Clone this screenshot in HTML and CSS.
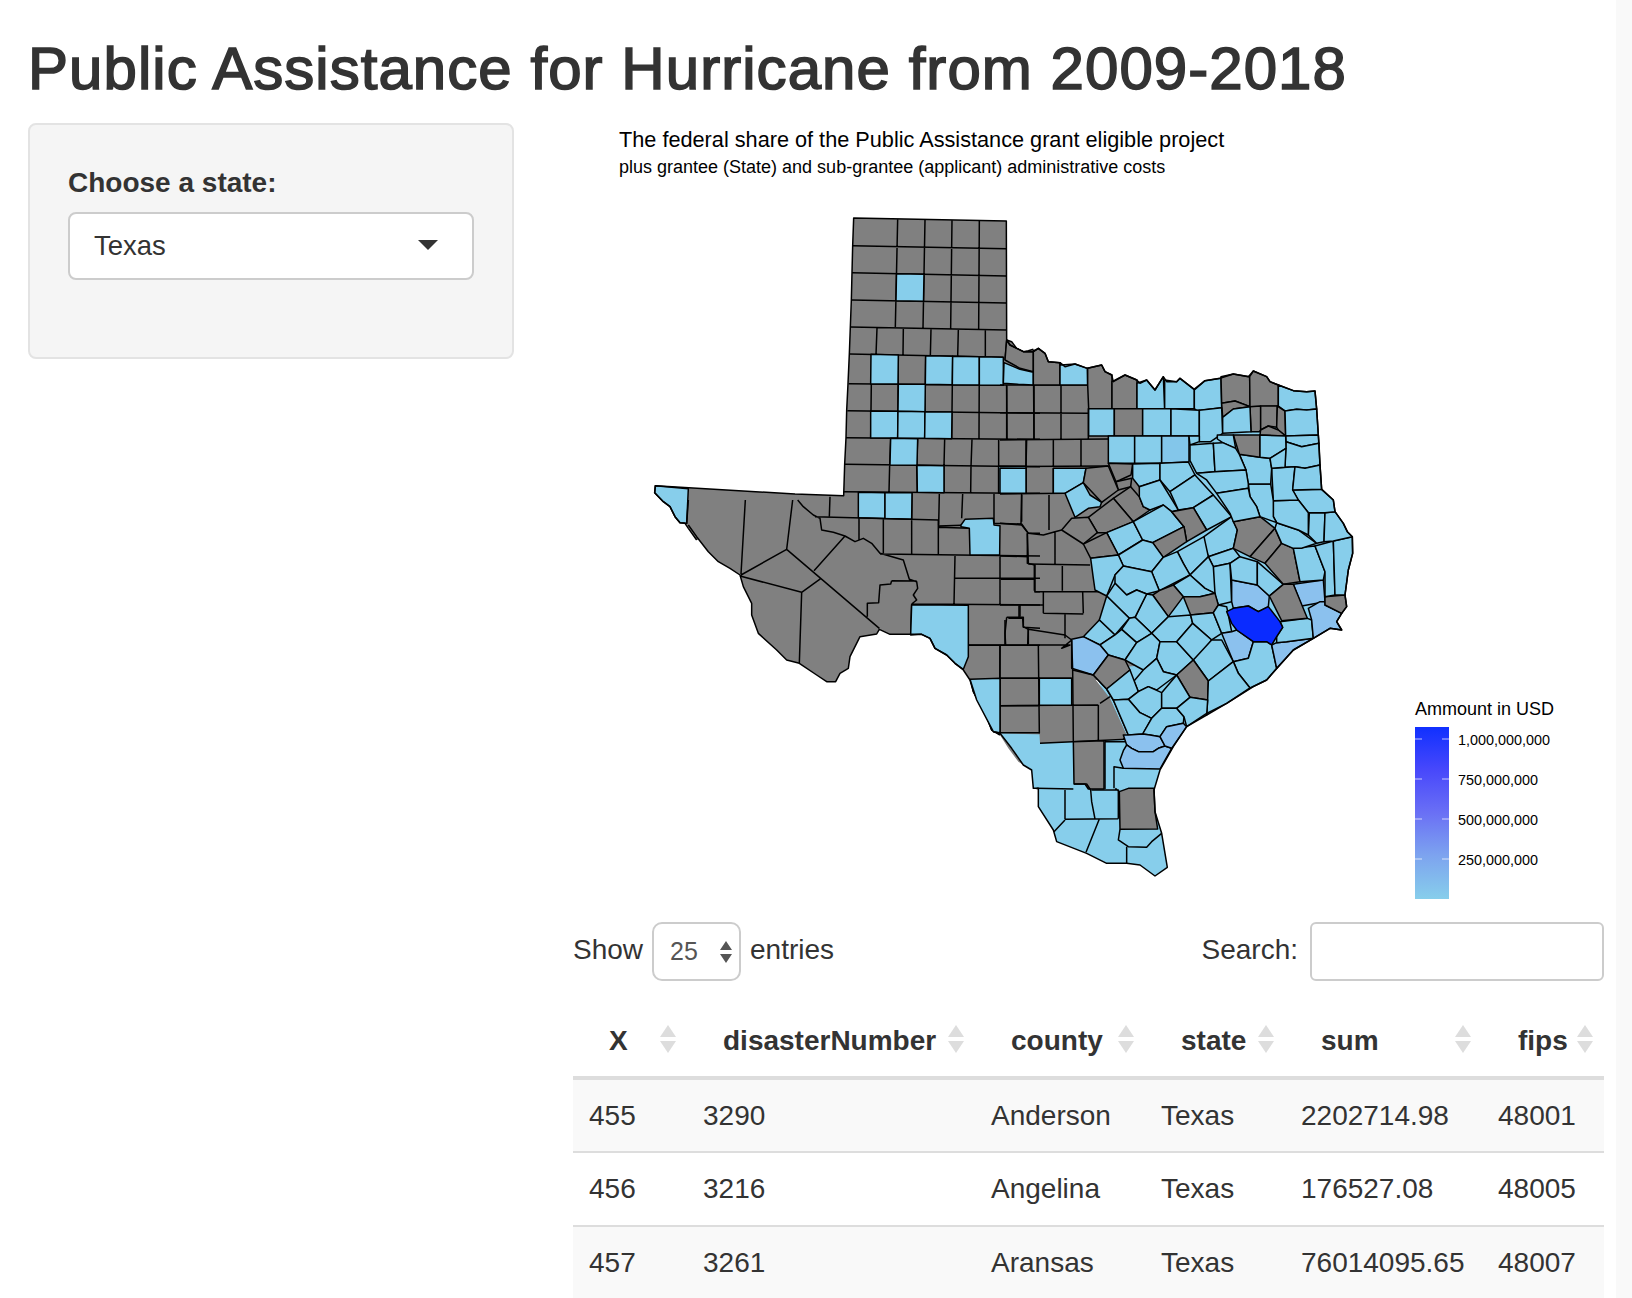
FILE: index.html
```html
<!DOCTYPE html>
<html lang="en">
<head>
<meta charset="utf-8">
<title>Public Assistance for Hurricane from 2009-2018</title>
<link rel="stylesheet" href="styles.css">
</head>
<body>
<div class="page">
  <h1 class="title">Public Assistance for Hurricane from 2009-2018</h1>
  <div class="layout">
    <aside class="panel">
      <label class="field-label">Choose a state:</label>
      <div class="picker"><span>Texas</span><i class="caret"></i></div>
    </aside>
    <main class="main">
      <svg class="plot" viewBox="573 123 1031 784" width="1031" height="784" xmlns="http://www.w3.org/2000/svg">
        <defs>
          <linearGradient id="scale" x1="0" y1="0" x2="0" y2="1">
            <stop offset="0" stop-color="#1030ff"/>
            <stop offset=".25" stop-color="#4848fb"/>
            <stop offset=".5" stop-color="#6a70f5"/>
            <stop offset=".75" stop-color="#7da4ef"/>
            <stop offset="1" stop-color="#87ceeb"/>
          </linearGradient>
        </defs>
        <text class="plot-title" x="619" y="147">The federal share of the Public Assistance grant eligible project</text>
        <text class="plot-sub" x="619" y="173">plus grantee (State) and sub-grantee (applicant) administrative costs</text>

        <g class="map">
          <!-- base fills -->
          <g transform="translate(640 200) scale(.33333)">
            <polygon class="base g" points="170,1020 145,985 135,970 120,968 105,950 90,920 70,905 44,878 46,857 465,882 611,887 614,793 618,713 620,632 624,551 628,462 631,381 634,300 636,218 638,137 641,54 1099,63 1100,420 1115,425 1130,445 1150,455 1165,452 1180,448 1200,445 1200,1020"/>
          </g>
          <g transform="translate(640 500) scale(.33333)">
            <polygon class="base g" points="145,75 170,110 205,155 235,185 270,205 300,225 310,260 335,310 335,345 355,400 410,450 440,480 478,490 530,525 560,545 587,545 600,520 625,505 630,470 660,410 710,402 718,388 750,403 810,403 845,403 870,415 885,445 920,465 945,490 970,510 990,540 1000,575 1040,650 1055,690 1080,705 1105,745 1135,785 1175,810 1180,865 1195,870 1200,920 1200,0 145,0"/>
          </g>
          <g transform="translate(1000 340) scale(.33333)">
            <polygon class="base g" points="20,0 30,15 70,35 100,35 115,25 135,40 145,65 180,68 195,80 225,72 262,85 305,75 315,95 335,105 340,125 375,105 410,120 420,130 440,120 465,150 490,110 500,125 530,125 540,115 582,148 615,122 660,115 700,102 745,110 760,93 800,110 810,125 835,135 880,152 920,155 945,153 950,207 955,285 960,375 965,448 1000,480 1005,515 1030,550 1042,575 1057,590 1058,640 1045,690 1035,765 1040,800 1025,820 1010,845 1025,870 990,865 940,895 880,930 800,1020 0,1020 0,0"/>
            <polygon class="base b" points="412,130 440,120 465,150 490,110 500,125 530,125 540,115 582,148 615,122 660,115 700,102 745,110 760,93 800,110 810,125 835,135 880,152 920,155 945,153 950,207 955,285 960,375 965,448 1000,480 1005,515 1030,550 1042,575 1057,590 1058,640 1045,690 1035,765 1040,800 1025,820 1010,845 1025,870 990,865 940,895 880,930 800,1020 600,1020 500,960 300,915 320,775 272,660 360,645 320,578 400,545 420,440 398,372 327,372 327,292 600,290 600,210 412,205"/>
          </g>
          <g transform="translate(960 620) scale(.33333)">
            <polygon class="base b" points="920,180 880,200 800,250 740,280 680,320 640,380 600,450 582,510 585,575 605,640 622,742 585,768 540,735 500,730 440,730 380,700 290,665 280,630 235,560 235,505 220,505 215,450 190,435 155,385 120,340 490,350 400,150 920,100"/>
            <polygon class="base g" points="25,0 390,0 360,55 335,60 335,150 400,170 450,235 500,345 490,358 415,362 340,365 240,370 238,340 118,338 100,335 50,240 30,178 10,150"/>
          </g>

          <!-- north-west: Panhandle and Trans-Pecos -->
          <g transform="translate(640 200) scale(.33333)">
            <path class="l" d="M773,58L766,381M855,60L849,385M936,61L932,385M1018,62L1016,388M711,385L708,464M790,386L789,466M873,388L871,468M955,389L953,470M1036,390L1036,470M695,465L692,712M775,466L773,715M857,468L854,716M938,470L935,717M1018,471L1017,718M1100,558L1101,720M1180,450L1182,720M638,137L1099,146M636,218L1099,228M634,300L1099,309M631,381L1099,390M629,462L1090,472M626,551L1090,556M622,632L1200,640M618,713L1200,718M615,793L1200,800M752,716L749,795M833,716L830,798M914,717L912,798M996,718L993,800M1076,718L1076,800M1160,718L1158,800M749,795L747,875M830,798L832,880M912,798L912,880M993,800L992,880M1076,800L1076,880M1158,800L1157,880M611,875L1200,880M570,890L568,950M816,880L815,960M898,882L896,975M968,882L965,955M1062,882L1062,970M1145,882L1143,972M1062,970L1145,972L1165,1000L1200,1000"/>
            <polygon class="b" points="769.5,221 852,222.6 850.5,304 768,302.6"/>
            <polygon class="b" points="693,463 775,465 774,552 692,552"/>
            <polygon class="b" points="857,467 938,469 937,554 856,553"/>
            <polygon class="b" points="938,469 1018,470 1018,555 937,554"/>
            <polygon class="b" points="1018,470 1090,472 1090,556 1018,555"/>
            <polygon class="b" points="775,553 856,553 855,635 774,634"/>
            <polygon class="b" points="692,633 774,634 773,714 692,714"/>
            <polygon class="b" points="774,634 855,635 854,715 773,714"/>
            <polygon class="b" points="855,635 936,636 935,716 854,715"/>
            <polygon class="b" points="752,715 833,716 831,796 750,795"/>
            <polygon class="b" points="831,796 912,797 912,878 832,877"/>
            <polygon class="b" points="1076,798 1158,799 1157,879 1076,879"/>
            <polygon class="b" points="655,877 735,878 735,955.7 655,953"/>
            <polygon class="b" points="735,878 816,878 815,957.8 735,955.7"/>
            <polygon class="b" points="46,857 145,866 140,970 120,968 105,950 90,920 70,905 44,878"/>
            <path class="l" d="M170,1020L145,985L135,970L120,968L105,950L90,920L70,905L44,878L46,857L465,882L611,887L614,793L618,713L620,632L624,551L628,462L631,381L634,300L636,218L638,137L641,54L1099,63L1100,420L1115,425L1130,445L1150,455L1165,452L1180,448"/>
          </g>

          <!-- south-west: Big Bend and border -->
          <g transform="translate(640 500) scale(.33333)">
            <path class="l" d="M145,0L140,72M316,0L303,222M458,0L440,148M303,225L440,148L718,385M300,228L485,277L543,235M522,212L615,108M485,277L478,490M473,0L490,20L520,45L540,55L545,90L580,97L615,108L645,125L670,115L695,130L720,160L790,180L808,238L830,245L833,265L820,285L830,300L815,312M755,242L830,243M755,242L752,252L720,255L716,308L682,310L682,350M815,312L812,403M525,50L895,60M657,55L657,120M730,58L730,160M815,60L815,163M895,62L895,165M720,162L1200,168M895,78L965,76M895,82L988,85M945,168L942,312M945,235L1200,235M1080,165L1080,312M815,312L1200,315M1137,316L1137,352M1100,352L1150,352L1150,382L1200,385M1100,352L1095,400L1097,435M1165,385L1163,435M985,436L1200,436M1080,436L1078,700M1080,535L1200,535M1082,617L1200,617M1078,698L1200,698M1162,100L1162,190L1185,195L1185,275L1200,275"/>
            <polygon class="b" points="963,75 975,58 1060,55 1062,75 1080,77 1079,165 990,165 988,85 963,80"/>
            <polygon class="b" points="815,314 985,316 985,470 970,508 945,490 920,465 885,445 870,415 845,403 812,405"/>
            <polygon class="b" points="992,540 1078,538 1076,698 1055,690 1040,650 1000,575"/>
            <path class="l" d="M145,75L170,110L205,155L235,185L270,205L300,225L310,260L335,310L335,345L355,400L410,450L440,480L478,490L530,525L560,545L587,545L600,520L625,505L630,470L660,410L710,402L718,388L750,403L810,403L845,403L870,415L885,445L920,465L945,490L970,510L990,540L1000,575L1040,650L1055,690L1080,705"/>
          </g>

          <!-- north-east and Gulf -->
          <g transform="translate(1000 340) scale(.33333)">
            <path class="l" d="M20,135L20,298M102,135L102,298M183,135L183,298M265,205L265,300M0,135L335,135M0,218L265,220M0,300L325,297M78,300L78,380M160,300L160,378M243,300L243,378M0,380L325,378M78,385L78,460M160,385L160,460M0,462L195,460M65,465L65,545M147,465L147,570M0,550L65,555L85,580L130,585L165,575L185,570M82,580L85,670M165,575L165,675M0,648L85,650M85,672L270,675M103,675L103,752M187,678L187,752M2,718L103,718M0,795L130,795M130,755L130,820M103,755L320,755M248,755L250,820M130,820L250,822M195,822L195,895M60,795L60,830M25,835L68,835L70,860L85,868M20,0L15,60"/>
            <polygon class="g" points="15,60 60,85 100,95 100,35 70,35 30,15 20,0"/>
            <polygon class="b" points="12,68 60,88 100,97 100,135 55,133 10,130"/>
            <polygon class="g" points="100,35 115,25 135,40 145,65 180,68 180,135 100,135"/>
            <polygon class="b" points="183,75 225,72 262,85 263,135 180,135 180,68"/>
            <polygon class="g" points="263,85 305,75 315,95 336,105 336,206 266,206 263,135"/>
            <polygon class="g" points="336,125 375,105 411,120 411,206 336,206"/>
            <polygon class="b" points="411,130 440,120 465,150 490,110 494,206 411,206"/>
            <polygon class="b" points="494,120 530,125 540,115 583,148 583,206 494,206"/>
            <polygon class="b" points="583,150 615,122 663,115 665,203 590,212 583,206"/>
            <polygon class="g" points="663,110 700,102 749,110 750,200 705,183 665,190"/>
            <polygon class="g" points="665,190 705,183 750,200 700,207 668,232"/>
            <polygon class="g" points="749,110 760,93 800,110 810,125 835,135 835,198 750,200"/>
            <polygon class="b" points="835,135 880,152 920,155 945,153 950,207 920,210 890,208 855,213 835,198"/>
            <polygon class="g" points="750,200 782,198 782,270 778,275 753,275"/>
            <polygon class="g" points="782,198 832,198 830,262 805,258 782,270"/>
            <polygon class="g" points="832,198 855,213 857,288 835,270 830,262"/>
            <polygon class="g" points="782,270 805,258 835,270 857,288 780,285"/>
            <polygon class="b" points="266,206 343,206 343,288 266,288"/>
            <polygon class="g" points="343,206 428,206 428,288 343,288"/>
            <polygon class="b" points="428,206 513,206 513,288 428,288"/>
            <polygon class="b" points="513,206 598,211 598,288 513,288"/>
            <polygon class="b" points="598,211 665,203 668,280 632,305 598,305"/>
            <polygon class="b" points="668,232 700,207 750,200 753,275 668,280"/>
            <polygon class="b" points="855,213 890,208 920,210 950,207 955,285 857,288"/>
            <polygon class="b" points="857,288 955,285 957,310 905,320 858,305"/>
            <polygon class="b" points="858,305 905,320 957,310 960,375 915,385 885,380 855,382"/>
            <polygon class="b" points="325,288 404,288 404,370 325,370"/>
            <polygon class="b" points="404,288 485,288 485,370 404,370"/>
            <polygon class="t" points="485,288 567,288 567,366 485,370"/>
            <polygon class="b" points="567,288 598,288 598,305 570,315"/>
            <polygon class="b" points="0,385 78,385 78,460 0,460"/>
            <polygon class="b" points="160,385 258,385 250,428 195,460 160,460"/>
            <polygon class="b" points="195,460 250,428 270,465 305,487 300,500 265,505 225,532"/>
            <polygon class="g" points="325,370 398,372 393,405 360,420 348,425"/>
            <polygon class="g" points="348,425 395,415 392,440 355,450"/>
            <polygon class="g" points="258,385 325,378 355,450 305,487 250,428"/>
            <polygon class="g" points="340,475 392,440 418,470 430,500 450,510 400,545"/>
            <polygon class="g" points="265,532 340,475 400,545 320,578 292,578"/>
            <polygon class="g" points="185,570 215,535 265,532 292,578 250,612"/>
            <polygon class="b" points="398,372 480,370 480,420 418,440 398,415"/>
            <polygon class="b" points="480,370 565,366 585,405 510,455 480,420"/>
            <polygon class="b" points="418,440 480,420 535,510 515,515 490,495 450,510 430,500 418,470"/>
            <polygon class="b" points="510,455 585,405 640,465 580,503 535,510"/>
            <polygon class="b" points="580,503 640,465 695,530 620,570"/>
            <polygon class="b" points="320,578 400,545 428,600 355,645"/>
            <polygon class="b" points="400,545 490,495 515,515 552,560 458,608 428,600"/>
            <polygon class="g" points="515,515 580,503 620,570 560,605 552,560"/>
            <polygon class="g" points="458,608 552,560 560,605 490,652"/>
            <polygon class="b" points="612,590 695,530 712,570 700,625 625,650 612,610"/>
            <polygon class="b" points="355,645 428,600 458,608 490,652 455,695 370,678"/>
            <polygon class="b" points="532,635 612,590 625,650 570,705 550,670"/>
            <polygon class="b" points="455,695 490,652 532,635 550,670 570,705 478,752"/>
            <polygon class="g" points="250,612 320,578 355,645 272,655"/>
            <polygon class="b" points="272,655 355,645 370,678 345,705 320,768 285,750 280,715"/>
            <polygon class="b" points="345,705 370,678 455,695 478,752 440,762 410,750 380,765 345,730"/>
            <polygon class="b" points="625,650 700,625 720,650 690,670 640,680"/>
            <polygon class="b" points="640,680 690,670 695,785 655,795 640,750"/>
            <polygon class="b" points="570,705 625,650 640,680 645,760 615,745"/>
            <polygon class="b" points="520,735 570,705 615,745 645,760 600,770 550,770"/>
            <polygon class="g" points="458,765 478,752 520,735 550,770 505,830"/>
            <polygon class="g" points="550,770 600,770 645,760 655,795 640,818 572,825"/>
            <polygon class="b" points="440,762 458,765 505,830 455,880 405,832"/>
            <polygon class="b" points="320,768 345,730 380,765 410,750 440,762 405,832 388,835"/>
            <polygon class="b" points="298,840 320,768 388,835 345,885"/>
            <polygon class="b" points="388,835 405,832 455,880 410,908 365,868"/>
            <polygon class="b" points="455,880 505,830 572,825 578,850 530,905 480,905"/>
            <polygon class="b" points="572,825 640,818 665,880 635,900 578,850"/>
            <polygon class="b" points="640,818 655,795 680,800 695,875 665,880"/>
            <polygon class="b" points="250,890 298,840 345,885 300,915"/>
            <polygon class="b" points="300,915 345,885 365,868 410,908 375,960 325,945"/>
            <polygon class="b" points="375,960 410,908 455,880 480,905 470,955 430,990"/>
            <polygon class="b" points="480,905 530,905 580,960 530,1005 490,995 470,955"/>
            <polygon class="b" points="530,905 578,850 635,900 610,935 580,960"/>
            <polygon class="m" points="215,898 250,890 300,915 325,945 280,1005 215,985"/>
            <polygon class="m" points="665,880 695,875 710,870 760,905 745,955 700,965"/>
            <polygon class="b" points="700,965 745,955 760,905 800,905 815,915 830,985 800,1020 750,1044 715,1000"/>
            <polygon class="m" points="815,915 830,908 860,905 940,895 880,930 830,985"/>
            <polygon class="b" points="840,845 922,835 935,840 940,895 860,905 830,908 830,890 848,862"/>
            <polygon class="m" points="695,720 772,735 808,768 805,800 775,815 745,798 700,805 695,785"/>
            <polygon class="b" points="690,670 720,650 772,665 772,735 695,720"/>
            <polygon class="b" points="772,665 850,733 808,768 772,735"/>
            <polygon class="g" points="700,545 780,530 825,565 750,650 700,625 712,570"/>
            <polygon class="g" points="750,650 825,565 845,610 795,670"/>
            <polygon class="g" points="795,670 845,610 880,625 900,725 850,733"/>
            <polygon class="m" points="880,733 970,720 975,785 905,798"/>
            <polygon class="g" points="808,768 850,733 880,733 922,835 845,842"/>
            <polygon class="m" points="925,805 960,785 975,785 975,795 1025,820 1010,845 1025,870 990,865 940,895 935,840"/>
            <polygon class="g" points="975,770 1035,765 1040,800 1025,820 975,795"/>
            <polygon class="b" points="880,625 945,618 975,695 970,720 900,725"/>
            <polygon class="b" points="945,618 1000,603 1005,765 975,770 975,695"/>
            <polygon class="b" points="1000,603 1057,590 1058,640 1045,690 1035,765 1005,765"/>
            <polygon class="b" points="825,565 830,548 895,570 950,610 905,625 880,625 845,610"/>
            <polygon class="b" points="928,518 975,518 972,605 950,610 925,585"/>
            <polygon class="b" points="975,518 1005,515 1030,550 1042,575 1057,590 1000,603 972,605"/>
            <polygon class="b" points="878,450 965,448 1000,480 1005,515 975,518 925,518 895,480"/>
            <polygon class="b" points="820,482 895,480 925,518 925,585 895,570 830,548 820,530"/>
            <polygon class="b" points="815,385 885,380 878,450 895,480 820,482"/>
            <polygon class="b" points="885,380 915,385 960,375 965,448 878,450"/>
            <polygon class="b" points="745,432 812,432 820,482 820,530 830,548 780,530 770,500 750,470"/>
            <polygon class="b" points="718,343 780,352 810,355 815,385 812,432 745,432 738,390"/>
            <polygon class="g" points="700,285 780,285 780,352 718,343"/>
            <polygon class="b" points="652,285 700,285 707,325 668,308 652,297"/>
            <polygon class="b" points="780,285 857,288 858,325 810,355 780,352"/>
            <polygon class="b" points="810,355 858,325 855,382 815,385"/>
            <polygon class="b" points="570,315 640,310 645,395 590,400 570,362"/>
            <polygon class="b" points="640,310 668,308 707,325 718,343 738,390 645,395"/>
            <polygon class="b" points="590,400 645,395 738,390 745,432 745,445 650,460 620,420"/>
            <polygon class="b" points="650,460 745,445 750,470 770,500 780,530 700,545 690,520"/>
            <polygon class="d" points="680,815 700,805 745,798 775,815 805,800 840,845 848,862 830,890 815,915 800,905 760,905 710,870 695,850"/>
            <path class="l" d="M20,0L30,15L70,35L100,35L115,25L135,40L145,65L180,68L195,80L225,72L262,85L305,75L315,95L335,105L340,125L375,105L410,120L420,130L440,120L465,150L490,110L500,125L530,125L540,115L582,148L615,122L660,115L700,102L745,110L760,93L800,110L810,125L835,135L880,152L920,155L945,153L950,207L955,285L960,375L965,448L1000,480L1005,515L1030,550L1042,575L1057,590L1058,640L1045,690L1035,765L1040,800L1025,820L1010,845L1025,870L990,865L940,895L880,930L800,1020"/>
          </g>

          <!-- south Texas -->
          <g transform="translate(960 620) scale(.33333)">
            <path class="l" d="M120,78L120,338M235,78L238,340M120,175L335,175M120,257L415,255M338,150L340,365M415,255L415,362M420,250L450,230M135,0L135,75M205,28L205,72M205,28L315,45L335,60M25,75L330,75L305,85L335,60M240,370L500,358M335,60L338,150L400,165L440,207L460,240L505,345L490,358"/>
            <polygon class="b" points="238,175 335,175 335,255 238,256"/>
            <polygon class="b" points="30,178 120,175 120,338 100,335 50,240"/>
            <polygon class="g" points="340,365 432,362 432,507 385,507 375,492 342,492"/>
            <polygon class="g" points="478,515 505,505 582,505 585,575 593,627 480,628"/>
            <polygon class="g" points="445,105 495,120 510,150 440,207 400,165"/>
            <polygon class="b" points="700,120 755,60 785,60 820,125 745,183"/>
            <polygon class="g" points="700,120 745,183 743,240 690,232 650,165"/>
            <polygon class="b" points="745,183 820,125 835,160 870,204 800,250 740,285 743,240"/>
            <polygon class="b" points="522,183 550,150 590,115 610,155 650,165 590,210 565,200 535,215"/>
            <polygon class="b" points="440,207 510,150 535,215 505,238 460,240"/>
            <polygon class="b" points="505,238 535,215 565,200 605,218 605,265 575,295 540,278"/>
            <polygon class="b" points="605,218 650,165 690,232 650,265 605,265"/>
            <polygon class="b" points="460,240 505,238 540,278 575,295 548,342 505,345"/>
            <polygon class="b" points="548,342 575,295 605,265 650,265 672,290 670,310 620,320 600,350 570,345"/>
            <polygon class="b" points="650,265 690,232 743,240 740,285 680,320 672,290"/>
            <polygon class="m" points="490,345 505,345 548,342 570,345 600,350 615,378 595,385 580,395 535,395 515,385 500,375"/>
            <polygon class="m" points="490,392 500,375 515,385 535,395 580,395 595,385 615,378 635,385 600,447 490,445 480,420"/>
            <polygon class="m" points="620,320 670,310 680,320 635,385 615,378 600,350"/>
            <path class="l" d="M497,365L435,365L435,507M462,505L462,440L490,445M466,505L478,515M230,505L340,507M315,510L315,598M342,492L380,492L392,510L395,545L405,597M395,510L475,510L475,596M315,598L475,596M315,600L282,635M418,597L378,697M480,628L475,660L505,680L560,682L575,665L605,640M500,680L500,730"/>
            <path class="l" d="M920,180L880,200L800,250L740,280L680,320L640,380L600,450L582,510L585,575L605,640L622,742L585,768L540,735L500,730L440,730L380,700L290,665L280,630L235,560L235,505L220,505L215,450L190,435L155,385L120,340L100,335"/>
          </g>
        </g>

        <text class="legend-title" x="1415" y="715">Ammount in USD</text>
        <rect x="1415" y="727" width="34" height="172" fill="url(#scale)"/>
        <path class="ticks" d="M1415,739h7M1442,739h7M1415,779h7M1442,779h7M1415,819h7M1442,819h7M1415,859h7M1442,859h7"/>
        <text class="legend-label" x="1458" y="745">1,000,000,000</text>
        <text class="legend-label" x="1458" y="785">750,000,000</text>
        <text class="legend-label" x="1458" y="825">500,000,000</text>
        <text class="legend-label" x="1458" y="865">250,000,000</text>
      </svg>

      <div class="controls">
        <div class="length">
          <span class="ctl-text">Show</span>
          <div class="length-box">
            <span>25</span>
            <svg class="spin" width="12" height="22" viewBox="0 0 12 22"><path d="M6 0L12 9H0zM0 13H12L6 22z"/></svg>
          </div>
          <span class="ctl-text">entries</span>
        </div>
        <label class="search"><span class="ctl-text">Search:</span><input class="search-input" type="text"></label>
      </div>

      <table class="data">
        <colgroup>
          <col class="c1"><col class="c2"><col class="c3"><col class="c4"><col class="c5"><col class="c6">
        </colgroup>
        <thead>
          <tr><th>X</th><th>disasterNumber</th><th>county</th><th>state</th><th>sum</th><th>fips</th></tr>
        </thead>
        <tbody>
          <tr><td>455</td><td>3290</td><td>Anderson</td><td>Texas</td><td>2202714.98</td><td>48001</td></tr>
          <tr><td>456</td><td>3216</td><td>Angelina</td><td>Texas</td><td>176527.08</td><td>48005</td></tr>
          <tr><td>457</td><td>3261</td><td>Aransas</td><td>Texas</td><td>76014095.65</td><td>48007</td></tr>
        </tbody>
      </table>
    </main>
  </div>
</div>
<div class="track"></div>
</body>
</html>
```
FILE: styles.css
```css
* { box-sizing: border-box; }
html, body { height: 1298px; overflow: hidden; }
body {
  margin: 0;
  display: flex;
  background: #fff;
  color: #333;
  font-family: "Liberation Sans", Arial, sans-serif;
  font-size: 28px;
}
.page { flex: 1; padding: 0 12px 0 28px; min-width: 0; }
.track { width: 16px; background: #f9f9f9; }
.title {
  margin: 36px 0 21px;
  font-size: 60px;
  line-height: 66px;
  font-weight: 400;
  letter-spacing: 1.05px;
  -webkit-text-stroke: 1.6px #333;
  white-space: nowrap;
}
.layout { display: flex; align-items: flex-start; gap: 59px; }
.panel {
  width: 486px;
  height: 236px;
  flex: none;
  padding: 38px 38px 38px 38px;
  background: #f5f5f5;
  border: 2px solid #e3e3e3;
  border-radius: 8px;
}
.field-label { display: block; font-weight: 700; line-height: 40px; margin-bottom: 9px; }
.picker {
  height: 68px;
  padding: 0 34px 0 24px;
  display: flex;
  align-items: center;
  justify-content: space-between;
  background: #fff;
  border: 2px solid #ccc;
  border-radius: 8px;
  font-size: 27.5px;
}
.caret { width: 0; height: 0; border: 10px solid transparent; border-top-color: #333; border-bottom-width: 0; margin-top: -2px; }
.main { width: 1031px; flex: none; }
.plot { display: block; }
.plot-title { font-size: 21.7px; fill: #000; }
.plot-sub { font-size: 18px; fill: #000; }
.legend-title { font-size: 18px; fill: #000; }
.legend-label { font-size: 14.4px; fill: #000; }
.ticks { stroke: #fff; stroke-opacity: .7; stroke-width: 1; fill: none; }
.map polygon, .map path { vector-effect: non-scaling-stroke; stroke: #000; stroke-width: 1.5; stroke-linejoin: round; }
.map .base { stroke: none; }
.map .l { fill: none; }
.g { fill: #808080; }
.b { fill: #87ceeb; }
.t { fill: #83c6ea; }
.m { fill: #8bc1ee; }
.d { fill: #0a2bff; }
.controls {
  margin-top: 15px;
  height: 59px;
  display: flex;
  align-items: center;
  justify-content: space-between;
}
.ctl-text { padding-bottom: 3px; }
.length { display: flex; align-items: center; gap: 9px; }
.length-box {
  width: 89px;
  height: 59px;
  padding: 0 7px 0 16px;
  display: flex;
  align-items: center;
  justify-content: space-between;
  border: 2px solid #ccc;
  border-radius: 10px;
  font-size: 25px;
  color: #555;
}
.spin { fill: #555; }
.search { display: flex; align-items: center; gap: 12px; }
.search-input {
  width: 294px;
  height: 59px;
  background: #fff;
  border: 2px solid #ccc;
  border-radius: 6px;
}
.data {
  margin-top: 22px;
  width: 1031px;
  table-layout: fixed;
  border-collapse: collapse;
}
.c1 { width: 114px; }
.c2 { width: 288px; }
.c3 { width: 170px; }
.c4 { width: 140px; }
.c5 { width: 197px; }
.c6 { width: 122px; }
.data th {
  position: relative;
  height: 75px;
  padding: 2px 0 0 36px;
  text-align: left;
  line-height: 40px;
  white-space: nowrap;
  border-bottom: 4px solid #ddd;
}
.data th::before, .data th::after {
  content: "";
  position: absolute;
  right: 11px;
  width: 0;
  height: 0;
  border: 8px solid transparent;
}
.data th::before { top: 22px; border-bottom: 12px solid #ddd; border-top: 0; }
.data th::after { top: 38px; border-top: 12px solid #ddd; border-bottom: 0; }
.data td {
  height: 74px;
  padding: 0 0 0 16px;
  line-height: 40px;
  white-space: nowrap;
  border-bottom: 2px solid #ddd;
}
.data tbody tr:nth-child(odd) { background: #f9f9f9; }
```
